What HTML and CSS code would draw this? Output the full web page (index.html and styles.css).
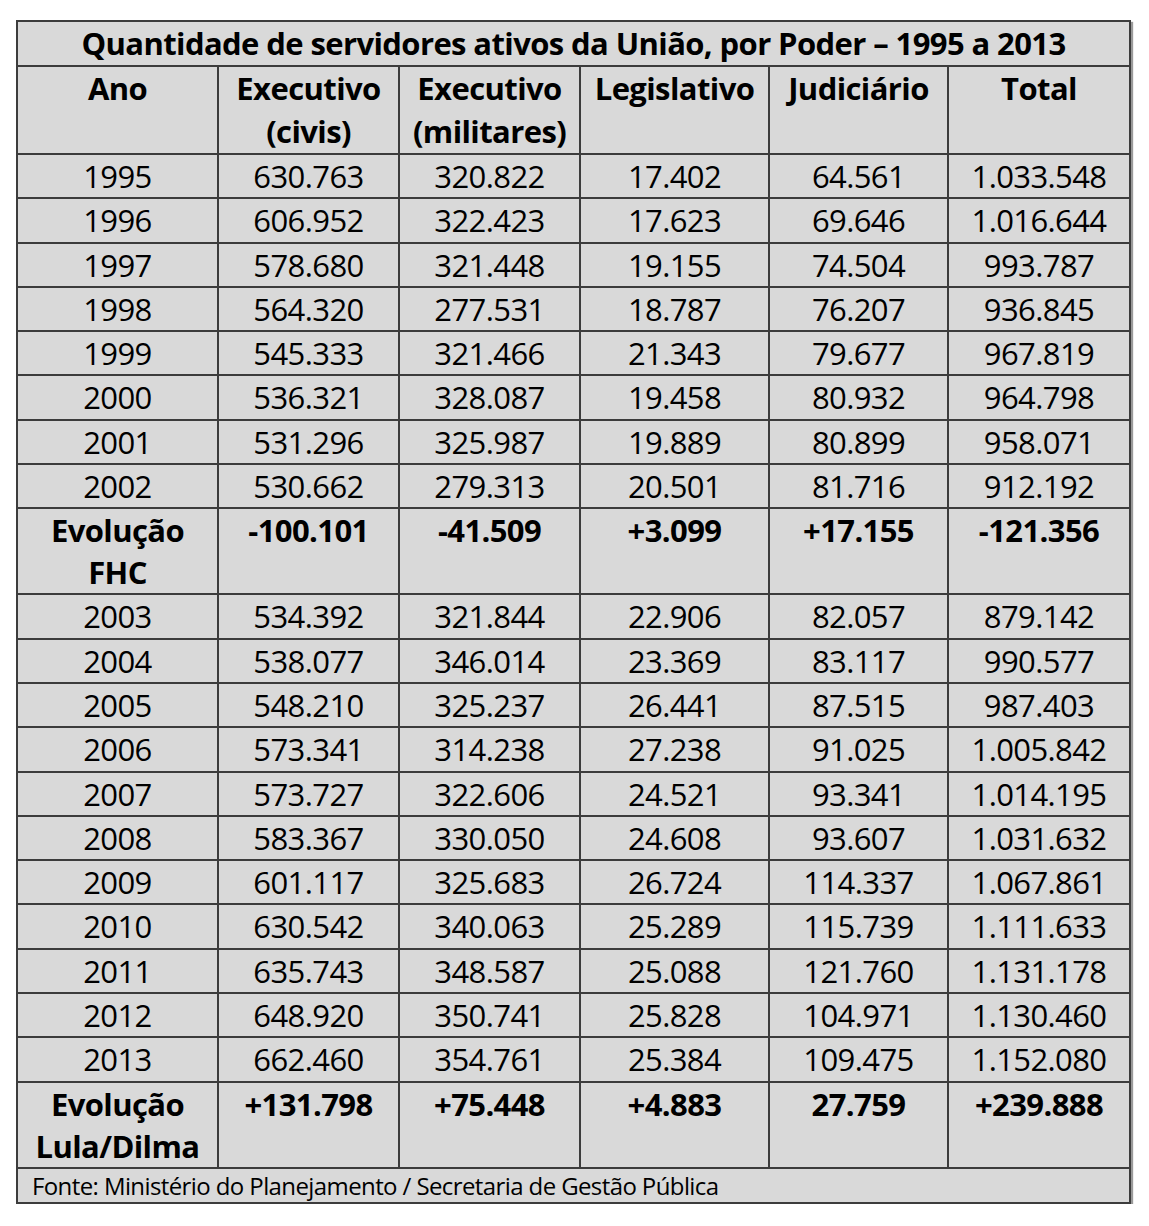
FILE: index.html
```html
<!DOCTYPE html>
<html lang="pt">
<head>
<meta charset="utf-8">
<title>Quantidade de servidores ativos da União</title>
<link rel="stylesheet" href="styles.css">
</head>
<body>
<div class="wrap">
<table class="tbl">
  <colgroup>
    <col class="c1"><col class="c2"><col class="c3"><col class="c4"><col class="c5"><col class="c6">
  </colgroup>
  <thead>
    <tr><th colspan="6" class="title">Quantidade de servidores ativos da União, por Poder – 1995 a 2013</th></tr>
    <tr class="head">
      <th>Ano</th><th>Executivo<br>(civis)</th><th>Executivo<br>(militares)</th><th>Legislativo</th><th>Judiciário</th><th>Total</th>
    </tr>
  </thead>
  <tbody>
    <tr><td>1995</td><td>630.763</td><td>320.822</td><td>17.402</td><td>64.561</td><td>1.033.548</td></tr>
    <tr><td>1996</td><td>606.952</td><td>322.423</td><td>17.623</td><td>69.646</td><td>1.016.644</td></tr>
    <tr><td>1997</td><td>578.680</td><td>321.448</td><td>19.155</td><td>74.504</td><td>993.787</td></tr>
    <tr><td>1998</td><td>564.320</td><td>277.531</td><td>18.787</td><td>76.207</td><td>936.845</td></tr>
    <tr><td>1999</td><td>545.333</td><td>321.466</td><td>21.343</td><td>79.677</td><td>967.819</td></tr>
    <tr><td>2000</td><td>536.321</td><td>328.087</td><td>19.458</td><td>80.932</td><td>964.798</td></tr>
    <tr><td>2001</td><td>531.296</td><td>325.987</td><td>19.889</td><td>80.899</td><td>958.071</td></tr>
    <tr><td>2002</td><td>530.662</td><td>279.313</td><td>20.501</td><td>81.716</td><td>912.192</td></tr>
    <tr class="evo"><td>Evolução<br>FHC</td><td>-100.101</td><td>-41.509</td><td>+3.099</td><td>+17.155</td><td>-121.356</td></tr>
    <tr><td>2003</td><td>534.392</td><td>321.844</td><td>22.906</td><td>82.057</td><td>879.142</td></tr>
    <tr><td>2004</td><td>538.077</td><td>346.014</td><td>23.369</td><td>83.117</td><td>990.577</td></tr>
    <tr><td>2005</td><td>548.210</td><td>325.237</td><td>26.441</td><td>87.515</td><td>987.403</td></tr>
    <tr><td>2006</td><td>573.341</td><td>314.238</td><td>27.238</td><td>91.025</td><td>1.005.842</td></tr>
    <tr><td>2007</td><td>573.727</td><td>322.606</td><td>24.521</td><td>93.341</td><td>1.014.195</td></tr>
    <tr><td>2008</td><td>583.367</td><td>330.050</td><td>24.608</td><td>93.607</td><td>1.031.632</td></tr>
    <tr><td>2009</td><td>601.117</td><td>325.683</td><td>26.724</td><td>114.337</td><td>1.067.861</td></tr>
    <tr><td>2010</td><td>630.542</td><td>340.063</td><td>25.289</td><td>115.739</td><td>1.111.633</td></tr>
    <tr><td>2011</td><td>635.743</td><td>348.587</td><td>25.088</td><td>121.760</td><td>1.131.178</td></tr>
    <tr><td>2012</td><td>648.920</td><td>350.741</td><td>25.828</td><td>104.971</td><td>1.130.460</td></tr>
    <tr><td>2013</td><td>662.460</td><td>354.761</td><td>25.384</td><td>109.475</td><td>1.152.080</td></tr>
    <tr class="evo"><td>Evolução<br>Lula/Dilma</td><td>+131.798</td><td>+75.448</td><td>+4.883</td><td>27.759</td><td>+239.888</td></tr>
  </tbody>
  <tfoot>
    <tr><td colspan="6" class="fonte">Fonte: Ministério do Planejamento / Secretaria de Gestão Pública</td></tr>
  </tfoot>
</table>
</div>
</body>
</html>
```

FILE: styles.css
```css
html, body {
  margin: 0;
  padding: 0;
  background: #ffffff;
}
.wrap {
  padding: 20px 0 0 16px;
}
.tbl {
  border-collapse: collapse;
  table-layout: fixed;
  width: 1113px;
  background: #d9d9d9;
  color: #000;
  font-family: "Open Sans", "Noto Sans", sans-serif;
  font-size: 31px;
  font-weight: 500;
  letter-spacing: -0.6px;
  box-shadow: 2px 2px 1px #9a9a9a;
}
.c1 { width: 201px; }
.c2 { width: 181px; }
.c3 { width: 181px; }
.c4 { width: 189px; }
.c5 { width: 179px; }
.c6 { width: 182px; }
.tbl th, .tbl td {
  border: 2px solid #3c3c3c;
  padding: 0;
  text-align: center;
  line-height: 42.3px;
  height: 42.3px;
  vertical-align: top;
  white-space: nowrap;
}
.tbl th { font-weight: 700; }
.title {
  line-height: 43px !important;
  height: 43px;
}
.head th {
  line-height: 43px !important;
  height: 86px;
}
.evo td {
  font-weight: 700;
  line-height: 42px;
  height: 84px;
}
.fonte {
  text-align: left !important;
  font-size: 24px;
  letter-spacing: -0.6px;
  padding-left: 14px !important;
  line-height: 33px !important;
  height: 33px !important;
}
```
